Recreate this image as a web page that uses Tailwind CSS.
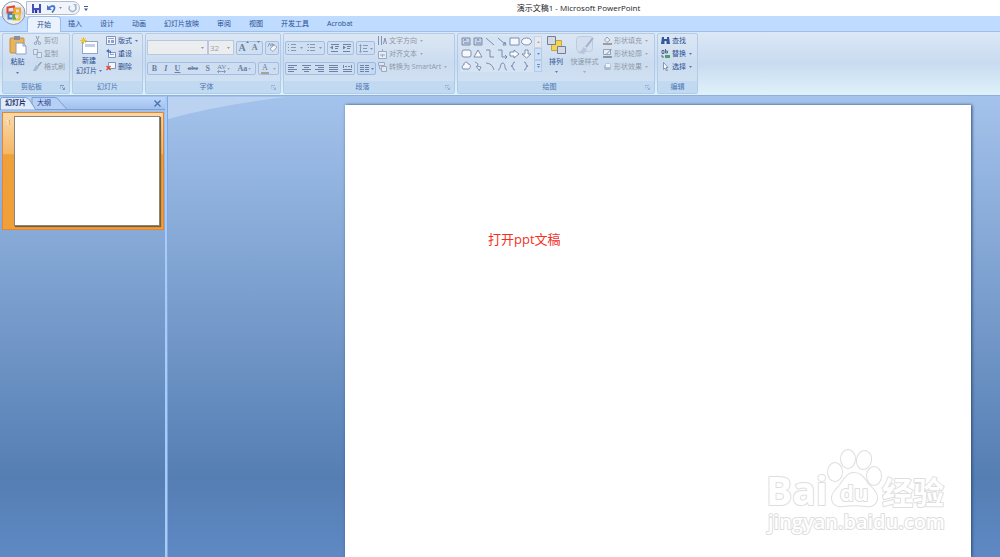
<!DOCTYPE html>
<html lang="zh-CN">
<head>
    <meta charset="utf-8"/>
    <meta content="width=device-width, initial-scale=1.0" name="viewport"/>
    <title>演示文稿1 - Microsoft PowerPoint</title>
    <script src="https://cdn.jsdelivr.net/npm/@tailwindcss/browser@4"></script>
</head>
<body class="flex flex-col min-h-screen overflow-hidden bg-white font-['Open_Sans','Noto_Sans_CJK_SC',sans-serif] text-[7px] leading-[13px] text-[#2a4f8f]">
    <!-- Title bar -->
    <header class="relative flex items-center h-4 bg-white">
        <div class="flex items-center gap-[6px] h-[14px] w-[54px] ml-[26px] pl-[5px] rounded-r-full border border-[#b3bccb] bg-[#f1f5fb]">
            <button aria-label="保存">
                <svg width="9" height="9" viewBox="0 0 9 9"><path d="M0 0h9v9H0z" fill="#4350b8"/><path d="M2 0h5v4H2z" fill="#f2f5ff"/><path d="M2 6h5v3H2z" fill="#c5cdf0"/><path d="M3 6h2v3H3z" fill="#2a3590"/></svg>
            </button>
            <button aria-label="撤消" class="flex items-center gap-[3px]">
                <svg width="9" height="9" viewBox="0 0 9 9" fill="none"><path d="M2 3.500q5-3 5.500 0 .3 2-2.500 5" stroke="#4a74c9" stroke-width="1.800"/><path d="M0 1v5h5z" fill="#4a74c9"/></svg>
                <svg width="3" height="2" viewBox="0 0 3 2"><path d="M0 0h3L1.500 2z" fill="#7d92b8"/></svg>
            </button>
            <button aria-label="重复">
                <svg width="9" height="9" viewBox="0 0 9 9" fill="none"><path d="M2 2a3.300 3.300 0 1 0 5 0" stroke="#a9b6cc" stroke-width="1.600"/><path d="M5 0h3.500v3.500z" fill="#a9b6cc"/></svg>
            </button>
        </div>
        <button aria-label="自定义快速访问工具栏" class="ml-1">
            <svg width="4" height="5" viewBox="0 0 4 5" fill="#3d5b94"><path d="M0 0h4v1H0zM0 2.500h4L2 5z"/></svg>
        </button>
        <h1 class="absolute inset-x-0 top-0 text-center text-[8px] leading-4 text-[#222] pl-[157px]">演示文稿1 - Microsoft PowerPoint</h1>
        <button aria-label="Office 按钮" class="absolute left-[1px] top-0 z-10">
            <svg width="26" height="26" viewBox="0 0 26 26">
                <defs>
                    <linearGradient id="orb" x1="0" y1="0" x2="0" y2="1"><stop offset="0" stop-color="#fff"/><stop offset=".5" stop-color="#cfd5e0"/><stop offset="1" stop-color="#f3f6fa"/></linearGradient>
                </defs>
                <circle cx="12.500" cy="13" r="11.500" fill="url(#orb)" stroke="#8796ad"/>
                <g fill="none" stroke-width="2">
                    <path d="M14 12.500H6.500v-5L13 6.500z" stroke="#dd4a2a"/>
                    <path d="M14 8.500h5v5h-5z" stroke="#f0a42c"/>
                    <path d="M7.500 14h4.500v4.500H7.500z" stroke="#3f7fd0"/>
                    <path d="M12.500 13.500h6v6h-6z" stroke="#f2bd2e"/>
                    <path d="M13 14v4.500h2" stroke="#5fae45"/>
                </g>
            </svg>
        </button>
    </header>

    <!-- Ribbon tabs -->
    <nav class="flex h-4 pl-[27px] bg-[#bfdbff] border-b border-[#9dbfec] leading-[15px]">
        <button class="h-4 px-[9px] rounded-t-sm border-x border-t border-[#9dbce6] bg-[#e9f2fd] -mr-[2px]">开始</button>
        <button class="px-[9px]">插入</button>
        <button class="px-[9px]">设计</button>
        <button class="px-[9px]">动画</button>
        <button class="px-[9px]">幻灯片放映</button>
        <button class="px-[9px]">审阅</button>
        <button class="px-[9px]">视图</button>
        <button class="px-[9px]">开发工具</button>
        <button class="px-[9px]">Acrobat</button>
    </nav>

    <!-- Ribbon -->
    <div class="flex gap-[2px] h-16 pl-[2px] pt-px pb-px bg-linear-to-b from-[#dbe8f7] via-[#c9dbf0] to-[#dff2fa] border-b border-[#8fb0dc]">
        <!-- Clipboard -->
        <section class="flex flex-col w-[68px] rounded-xs border border-[#b2cbe8] bg-linear-to-b from-[#dce7f4] via-[#cbdcf0] to-[#d4e4f4]">
            <div class="flex flex-1">
                <button class="flex flex-col items-center w-7 pl-px pt-px">
                    <svg width="18" height="20" viewBox="0 0 18 20"><rect x="1" y="3" width="14" height="15" rx="1" fill="#e9b45c" stroke="#c48d3a"/><path d="M5 1h6v4H5z" fill="#8a8f9c"/><path d="M7 8h7l3 3v8H7z" fill="#fff" stroke="#8ba0c8"/><path d="M14 8v3h3" fill="none" stroke="#8ba0c8"/></svg>
                    <span class="leading-[13px]">粘贴</span>
                    <svg class="mt-1" width="3" height="2" viewBox="0 0 3 2" fill="#5679b5"><path d="M0 0h3L1.500 2z"/></svg>
                </button>
                <div class="flex flex-col items-start pl-[2px] text-[#8f99a6]">
                    <button class="flex items-center gap-[2px]"><svg width="9" height="9" viewBox="0 0 9 9" fill="none" stroke="#8f9db5"><path d="M3 0l2.500 6M6 0L3.500 6"/><circle cx="2.500" cy="7.300" r="1.200"/><circle cx="6.500" cy="7.300" r="1.200"/></svg>剪切</button>
                    <button class="flex items-center gap-[2px]"><svg width="9" height="9" viewBox="0 0 9 9" fill="#dfe7f2" stroke="#a2b0c7"><path d="M.5.500h4v5h-4zM4 3.500h4.500v5H4z"/></svg>复制</button>
                    <button class="flex items-center gap-[2px]"><svg width="9" height="9" viewBox="0 0 9 9"><path d="M8.500 0 5 4" stroke="#8e9ebb" stroke-width="1.500"/><path d="M3 3l3 2-3 4H0z" fill="#a9b7cc"/></svg>格式刷</button>
                </div>
            </div>
            <div class="flex items-center h-3 bg-[#c1d9f1] text-[#4d74ae] leading-3"><h2 class="flex-1 text-center">剪贴板</h2><button aria-label="剪贴板选项" class="mr-1"><svg width="5" height="5" viewBox="0 0 5 5" fill="none" stroke="#7897c3"><path d="M0 4V.500h4M2 2l2.500 2.500M4.500 2.500v2h-2"/></svg></button></div>
        </section>

        <!-- Slides -->
        <section class="flex flex-col w-[71px] rounded-xs border border-[#b2cbe8] bg-linear-to-b from-[#dce7f4] via-[#cbdcf0] to-[#d4e4f4]">
            <div class="flex flex-1">
                <button class="flex flex-col items-center w-[31px] pl-px pt-[2px]">
                    <svg width="20" height="19" viewBox="0 0 20 19"><rect x="3.500" y="5.500" width="15" height="12" fill="#fff" stroke="#8fa5cc"/><path d="M6 8h10v3H6z" fill="#c2cfe6"/><path d="M4.500 1v7M1 4.500h7M2 2l5 5M7 2L2 7" stroke="#f0c22d"/></svg>
                    <span class="leading-[11px]">新建</span>
                    <span class="flex items-center gap-[2px] leading-[10px] whitespace-nowrap">幻灯片<svg width="3" height="2" viewBox="0 0 3 2" fill="#5679b5"><path d="M0 0h3L1.500 2z"/></svg></span>
                </button>
                <div class="flex flex-col items-start pl-[2px]">
                    <button class="flex items-center gap-[2px]"><svg width="10" height="9" viewBox="0 0 10 9"><path d="M.5.500h9v8h-9z" fill="#f3f7fd" stroke="#7d95bf"/><path d="M2 2h6v1H2zM2 4h2v3H2zM5 4h3v3H5z" fill="#8da3c9"/></svg>版式<svg class="ml-px" width="3" height="2" viewBox="0 0 3 2" fill="#5679b5"><path d="M0 0h3L1.500 2z"/></svg></button>
                    <button class="flex items-center gap-[2px]"><svg width="10" height="9" viewBox="0 0 10 9"><path d="M2.500 3.500h7v5h-7z" fill="#f3f7fd" stroke="#7d95bf"/><path d="M4 5h4v1H4z" fill="#8da3c9"/><path d="M2 2h2.500v2.500" fill="none" stroke="#3e6cc4"/><path d="M0 2 3 0v4z" fill="#3e6cc4"/></svg>重设</button>
                    <button class="flex items-center gap-[2px]"><svg width="10" height="9" viewBox="0 0 10 9"><path d="M2.500.500h7v6h-7z" fill="#f3f7fd" stroke="#7d95bf"/><path d="M.5 4 4.500 8M4.500 4 .5 8" stroke="#e0452b" stroke-width="1.400"/></svg>删除</button>
                </div>
            </div>
            <h2 class="h-3 bg-[#c1d9f1] text-[#4d74ae] text-center leading-3">幻灯片</h2>
        </section>

        <!-- Font -->
        <section class="flex flex-col w-[136px] rounded-xs border border-[#b2cbe8] bg-linear-to-b from-[#dce7f4] via-[#cbdcf0] to-[#d4e4f4]">
            <div class="flex flex-col flex-1 gap-[7px] pl-px pt-[6px]">
                <div class="flex items-center gap-[2px]">
                    <div class="flex h-[15px]">
                        <div class="relative">
                            <select aria-label="字体" class="w-[61px] h-[15px] appearance-none border border-[#b7c9e0] bg-[#ecedee]"><option></option></select>
                            <svg class="absolute right-1 top-[7px]" width="3" height="2" viewBox="0 0 3 2" fill="#9a9a9a"><path d="M0 0h3L1.500 2z"/></svg>
                        </div>
                        <div class="relative">
                            <select aria-label="字号" class="w-[26px] h-[15px] pl-px appearance-none border border-[#b7c9e0] text-[8px] leading-3 text-[#a0a0a0] bg-[#ecedee]"><option>32</option></select>
                            <svg class="absolute right-1 top-[7px]" width="3" height="2" viewBox="0 0 3 2" fill="#9a9a9a"><path d="M0 0h3L1.500 2z"/></svg>
                        </div>
                    </div>
                    <div class="flex items-center justify-around w-[27px] h-[14px] rounded-xs border border-[#a3bee2] bg-[#cfdff2] font-['Liberation_Serif',serif] font-bold text-[#6c7f9f]">
                        <button aria-label="增大字号" class="flex text-[10px]">A<svg width="3" height="3" viewBox="0 0 3 3" fill="#6c7f9f"><path d="M0 2h3L1.500 0z"/></svg></button>
                        <button aria-label="减小字号" class="flex text-[8px]">A<svg width="3" height="3" viewBox="0 0 3 3" fill="#6c7f9f"><path d="M0 0h3L1.500 2z"/></svg></button>
                    </div>
                    <button aria-label="清除格式" class="flex items-center justify-center w-[14px] h-[14px] rounded-xs border border-[#a3bee2] bg-[#cfdff2]"><svg width="10" height="9" viewBox="0 0 10 9"><path d="M1 3.500 2.500 0 4 3.500M5 0v3h2V1.500H5" fill="none" stroke="#8d9cb5"/><path d="M3 6l4-4 3 2-4 4.500z" fill="#f3f5f9" stroke="#9aa9c0"/></svg></button>
                </div>
                <div class="flex items-center gap-[2px] h-[13px]">
                    <div class="flex items-center justify-around w-[109px] h-[13px] rounded-xs border border-[#a3bee2] bg-[#cddef2] font-['Liberation_Serif',serif] font-bold text-[8px] leading-[11px] text-[#6c7f9f]">
                        <button aria-label="加粗">B</button>
                        <button aria-label="倾斜" class="italic">I</button>
                        <button aria-label="下划线" class="underline">U</button>
                        <button aria-label="删除线" class="line-through text-[7px]">abc</button>
                        <button aria-label="阴影">S</button>
                        <button aria-label="字符间距" class="flex items-center gap-px text-[7px] leading-[6px] font-normal"><span class="flex flex-col">AV<svg width="9" height="3" viewBox="0 0 9 3"><path d="M1 1.500h7M2 0 .5 1.500 2 3M7 0l1.500 1.500L7 3" fill="none" stroke="#6c7f9f" stroke-width=".7"/></svg></span><svg width="3" height="2" viewBox="0 0 3 2" fill="#a9a9a9"><path d="M0 0h3L1.500 2z"/></svg></button>
                        <button aria-label="更改大小写" class="flex items-center gap-px">Aa<svg width="3" height="2" viewBox="0 0 3 2" fill="#a9a9a9"><path d="M0 0h3L1.500 2z"/></svg></button>
                    </div>
                    <button aria-label="字体颜色" class="flex items-center justify-center gap-1 w-[21px] h-[13px] rounded-xs border border-[#a3bee2] bg-[#cddef2] font-['Liberation_Serif',serif] text-[8px] leading-[8px] text-[#6c7f9f]"><span class="px-px border-b-2 border-[#a79f98]">A</span><svg width="3" height="2" viewBox="0 0 3 2" fill="#a9a9a9"><path d="M0 0h3L1.500 2z"/></svg></button>
                </div>
            </div>
            <div class="flex items-center h-3 bg-[#c1d9f1] text-[#4d74ae] leading-3"><h2 class="flex-1 text-center pr-1">字体</h2><button aria-label="字体选项" class="mr-1"><svg width="5" height="5" viewBox="0 0 5 5" fill="none" stroke="#9db3d2"><path d="M0 4V.500h4M2 2l2.500 2.500M4.500 2.500v2h-2"/></svg></button></div>
        </section>

        <!-- Paragraph -->
        <section class="flex flex-col w-[172px] rounded-xs border border-[#b2cbe8] bg-linear-to-b from-[#dce7f4] via-[#cbdcf0] to-[#d4e4f4]">
            <div class="flex flex-1 gap-[2px] pl-px">
                <div class="flex flex-col gap-[7px] pt-[7px]">
                    <div class="flex gap-[2px]">
                        <div class="flex items-center justify-around w-10 h-[14px] rounded-xs border border-[#a3bee2] bg-[#cfdff2]">
                            <button aria-label="项目符号"><svg width="15" height="8" viewBox="0 0 15 8" fill="#8798b6"><path d="M0 0h1v1H0zM0 3h1v1H0zM0 6h1v1H0zM3 0h5v1H3zM3 3h5v1H3zM3 6h5v1H3zM12 3h3l-1.500 2z"/></svg></button>
                            <button aria-label="编号"><svg width="15" height="8" viewBox="0 0 15 8" fill="#8798b6"><path d="M0 0h2v1H0zM1 3h1v1H1zM0 6h2v1H0zM3 0h5v1H3zM3 3h5v1H3zM3 6h5v1H3zM12 3h3l-1.500 2z"/></svg></button>
                        </div>
                        <div class="flex items-center justify-around w-[27px] h-[14px] rounded-xs border border-[#a3bee2] bg-[#cfdff2]">
                            <button aria-label="减少缩进"><svg width="9" height="8" viewBox="0 0 9 8" fill="#7082a3"><path d="M1 0h8v1H1zM5 2h4v1H5zM5 4h3v1H5zM1 7h7v1H1zM0 3.500 3 1.500v4z"/></svg></button>
                            <button aria-label="增加缩进"><svg width="9" height="8" viewBox="0 0 9 8" fill="#7082a3"><path d="M1 0h8v1H1zM5 2h4v1H5zM5 4h3v1H5zM1 7h7v1H1zM4 3.500 1 1.500v4z"/></svg></button>
                        </div>
                        <button aria-label="行距" class="flex items-center justify-center w-[19px] h-[14px] rounded-xs border border-[#a3bee2] bg-[#cfdff2]"><svg width="14" height="9" viewBox="0 0 14 9" fill="#8798b6"><path d="M1 2h1v5H1zM0 2h3L1.500 0zM0 7h3L1.500 9zM4 1h5v1H4zM4 4h4v1H4zM4 7h5v1H4zM11 4h3l-1.500 2z"/></svg></button>
                    </div>
                    <div class="flex gap-[2px]">
                        <div class="flex items-center justify-around w-[70px] h-[13px] rounded-xs border border-[#a3bee2] bg-[#cddef2]">
                            <button aria-label="文本左对齐"><svg width="9" height="8" viewBox="0 0 9 8" fill="#7082a3"><path d="M0 0h9v1H0zM0 2h6v1H0zM0 4h9v1H0zM0 6h6v1H0z"/></svg></button>
                            <button aria-label="居中"><svg width="9" height="8" viewBox="0 0 9 8" fill="#7082a3"><path d="M0 0h9v1H0zM2 2h5v1H2zM0 4h9v1H0zM2 6h5v1H2z"/></svg></button>
                            <button aria-label="文本右对齐"><svg width="9" height="8" viewBox="0 0 9 8" fill="#7082a3"><path d="M0 0h9v1H0zM3 2h6v1H3zM0 4h9v1H0zM3 6h6v1H3z"/></svg></button>
                            <button aria-label="两端对齐"><svg width="9" height="8" viewBox="0 0 9 8" fill="#7082a3"><path d="M0 0h9v1H0zM0 2h9v1H0zM0 4h9v1H0zM0 6h9v1H0z"/></svg></button>
                            <button aria-label="分散对齐"><svg width="9" height="8" viewBox="0 0 9 8" fill="#7082a3"><path d="M0 0h1v3H0zM8 0h1v3H8zM2 1h2v1H2zM5 1h2v1H5zM0 4h9v1H0zM0 6h9v1H0z"/></svg></button>
                        </div>
                        <button aria-label="分栏" class="flex items-center justify-center w-[19px] h-[13px] rounded-xs border border-[#9ab8e0] bg-[#c5d9f2]"><svg width="14" height="8" viewBox="0 0 14 8" fill="#7082a3"><path d="M0 0h4v1H0zM0 2h4v1H0zM0 4h4v1H0zM0 6h4v1H0zM5 0h4v1H5zM5 2h4v1H5zM5 4h4v1H5zM5 6h4v1H5zM11 3h3l-1.500 2z"/></svg></button>
                    </div>
                </div>
                <div class="flex flex-col items-start text-[#8f99a6] whitespace-nowrap">
                    <button class="flex items-center gap-[2px]"><svg width="9" height="10" viewBox="0 0 9 10" fill="none" stroke="#7f92b2"><path d="M.5 0v9M3.500 0v9M5.500 8 7 2l1.500 6"/></svg>文字方向<svg class="ml-px" width="3" height="2" viewBox="0 0 3 2" fill="#a9a9a9"><path d="M0 0h3L1.500 2z"/></svg></button>
                    <button class="flex items-center gap-[2px]"><svg width="9" height="10" viewBox="0 0 9 10" fill="#e6edf6" stroke="#9aaac4"><path d="M.5 2.500h8v7h-8z"/><path d="M4.500 0v3M2 6h5M4.500 5v3"/></svg>对齐文本<svg class="ml-px" width="3" height="2" viewBox="0 0 3 2" fill="#a9a9a9"><path d="M0 0h3L1.500 2z"/></svg></button>
                    <button class="flex items-center gap-[2px]"><svg width="9" height="10" viewBox="0 0 9 10" fill="#dfe7f2" stroke="#9aaac4"><path d="M.5.500h6v3h-6zM3.500 4.500h5v5h-5zM1.500 4v3h2"/></svg>转换为 SmartArt<svg class="ml-px" width="3" height="2" viewBox="0 0 3 2" fill="#a9a9a9"><path d="M0 0h3L1.500 2z"/></svg></button>
                </div>
            </div>
            <div class="flex items-center h-3 bg-[#c1d9f1] text-[#4d74ae] leading-3"><h2 class="flex-1 text-center pr-1">段落</h2><button aria-label="段落选项" class="mr-1"><svg width="5" height="5" viewBox="0 0 5 5" fill="none" stroke="#9db3d2"><path d="M0 4V.500h4M2 2l2.500 2.500M4.500 2.500v2h-2"/></svg></button></div>
        </section>

        <!-- Drawing -->
        <section class="flex flex-col w-[198px] rounded-xs border border-[#b2cbe8] bg-linear-to-b from-[#dce7f4] via-[#cbdcf0] to-[#d4e4f4]">
            <div class="flex flex-1 pl-[2px]">
                <div class="flex h-9 mt-[2px] bg-[#d5e3f3]">
                    <svg width="74" height="36" viewBox="0 0 74 36" fill="#f5f8fc" stroke="#64799f" stroke-width=".8" role="img" aria-label="形状">
                        <path d="M2 2h8v7H2zM14 2h8v7h-8z" fill="#c9d5e6"/><path d="M4 5l1-2 1 2M17 5l1-2 1 2M4 7h5M16 7h5"/>
                        <path d="M26 2l8 7M38 2l7 6M46 9l-3 0 2-3z"/><path d="M50 2h9v7h-9z"/><ellipse cx="66.500" cy="5.500" rx="5" ry="3.500"/>
                        <rect x="2" y="14" width="9" height="7" rx="2"/><path d="M18 14l4 7h-8z"/>
                        <g fill="none"><path d="M26 14h4v7h4M38 14h4v7h5M45 19l2 2-2 2"/></g>
                        <path d="M50 16h4v-2l5 4-5 4v-2h-4zM65 14h3v4h3l-4.500 4-4.500-4h3z"/>
                        <path d="M3 33c-2-3 0-4 1-4-1-3 4-4 4-1 3 0 3 3 1 5z"/><path d="M15 26l3 2-1 2 4 1-2 4M16 30l3 4"/>
                        <g fill="none"><path d="M26 27q6 0 8 7M38 34c3 0 2-8 5-7s1 7 4 7M55 26q-2 0-2 2t-2 2q2 0 2 2t2 2M64 26q2 0 2 2t2 2q-2 0-2 2t-2 2"/></g>
                    </svg>
                    <div class="flex flex-col w-2 text-[#6b8cc2]">
                        <button aria-label="上一行" class="flex flex-1 items-center justify-center border border-[#c9d5e4] bg-[#e6eaf0]"><svg width="3" height="2" viewBox="0 0 3 2" fill="#a9a9a9"><path d="M0 2h3L1.500 0z"/></svg></button>
                        <button aria-label="下一行" class="flex flex-1 items-center justify-center border border-[#b3cbea] bg-[#cfe0f6]"><svg width="3" height="2" viewBox="0 0 3 2" fill="currentColor"><path d="M0 0h3L1.500 2z"/></svg></button>
                        <button aria-label="其他" class="flex flex-1 items-center justify-center border border-[#b3cbea] bg-[#cfe0f6]"><svg width="3" height="4" viewBox="0 0 3 4" fill="currentColor"><path d="M0 0h3v1H0zM0 2h3L1.500 4z"/></svg></button>
                    </div>
                </div>
                <button class="flex flex-col items-center w-[27px] pl-px pt-px">
                    <svg width="20" height="20" viewBox="0 0 20 20"><path d="M5.500 5.500h10v10h-10z" fill="#f5d254" stroke="#c9a43a"/><path d="M1.500 1.500h8v8h-8zM11.500 11.500h8v7h-8z" fill="#d5dae2" stroke="#70809c"/></svg>
                    <span class="leading-[13px]">排列</span>
                    <svg class="mt-[3px]" width="3" height="2" viewBox="0 0 3 2" fill="#5679b5"><path d="M0 0h3L1.500 2z"/></svg>
                </button>
                <button class="flex flex-col items-center w-[31px] pt-px text-[#8f99a6] whitespace-nowrap">
                    <svg width="20" height="20" viewBox="0 0 20 20"><rect x="1.500" y="1.500" width="16" height="15" rx="3" fill="#d3dfee" stroke="#bccbe0"/><path d="M18 3l-7 9" stroke="#9fb0ca" stroke-width="2"/><path d="M8 12l4 2-3 5-7-1q5-1 6-6z" fill="#b9c6da"/></svg>
                    <span class="leading-[13px]">快速样式</span>
                    <svg class="mt-[3px]" width="3" height="2" viewBox="0 0 3 2" fill="#a9a9a9"><path d="M0 0h3L1.500 2z"/></svg>
                </button>
                <div class="flex flex-col items-start pl-[3px] text-[#8f99a6] whitespace-nowrap">
                    <button class="flex items-center gap-[2px]"><svg width="9" height="9" viewBox="0 0 9 9"><path d="M1.500 4 4 1l3 3-3 2.500z" fill="#e8edf4" stroke="#93a3bd"/><path d="M0 7h9v2H0z" fill="#a39c94"/></svg>形状填充<svg class="ml-px" width="3" height="2" viewBox="0 0 3 2" fill="#a9a9a9"><path d="M0 0h3L1.500 2z"/></svg></button>
                    <button class="flex items-center gap-[2px]"><svg width="9" height="9" viewBox="0 0 9 9"><path d="M.5.500h7v5h-7z" fill="#e8edf4" stroke="#93a3bd"/><path d="M8.500 0 3 5.500" stroke="#7c8dab"/><path d="M0 7h9v2H0z" fill="#8c94a3"/></svg>形状轮廓<svg class="ml-px" width="3" height="2" viewBox="0 0 3 2" fill="#a9a9a9"><path d="M0 0h3L1.500 2z"/></svg></button>
                    <button class="flex items-center gap-[2px]"><svg width="9" height="9" viewBox="0 0 9 9"><rect x="1" y="3" width="7" height="5" rx="2" fill="#a9b8cf"/><rect x="2.500" y="1.500" width="5" height="4" rx="1" fill="#f1f4f9" stroke="#b4c1d6"/></svg>形状效果<svg class="ml-px" width="3" height="2" viewBox="0 0 3 2" fill="#a9a9a9"><path d="M0 0h3L1.500 2z"/></svg></button>
                </div>
            </div>
            <div class="flex items-center h-3 bg-[#c1d9f1] text-[#4d74ae] leading-3"><h2 class="flex-1 text-center pr-1">绘图</h2><button aria-label="绘图选项" class="mr-1"><svg width="5" height="5" viewBox="0 0 5 5" fill="none" stroke="#9db3d2"><path d="M0 4V.500h4M2 2l2.500 2.500M4.500 2.500v2h-2"/></svg></button></div>
        </section>

        <!-- Editing -->
        <section class="flex flex-col w-[41px] rounded-xs border border-[#b2cbe8] bg-linear-to-b from-[#dce7f4] via-[#cbdcf0] to-[#d4e4f4]">
            <div class="flex flex-col items-start flex-1 pl-[3px]">
                <button class="flex items-center gap-[2px]"><svg width="9" height="9" viewBox="0 0 9 9" fill="#34579c"><path d="M1 1h2v2h3V1h2l1 7H5.500V5h-2v3H0z"/></svg>查找</button>
                <button class="flex items-center gap-[2px]"><svg width="9" height="9" viewBox="0 0 9 9" fill="none"><path d="M1 1.500h2v3H1zM4.500 0v4h2V2h-2" stroke="#54678d"/><path d="M1 6v2h2" stroke="#54678d"/><path d="M4 6h5v3H4z" fill="#49a060"/></svg>替换<svg class="ml-px" width="3" height="2" viewBox="0 0 3 2" fill="#5679b5"><path d="M0 0h3L1.500 2z"/></svg></button>
                <button class="flex items-center gap-[2px]"><svg width="9" height="9" viewBox="0 0 9 9"><path d="M2.500.500v7l1.500-1.500 1.500 3 1-.5-1.500-3h2z" fill="#fff" stroke="#6e82a8" stroke-width=".8"/></svg>选择<svg class="ml-px" width="3" height="2" viewBox="0 0 3 2" fill="#5679b5"><path d="M0 0h3L1.500 2z"/></svg></button>
            </div>
            <h2 class="h-3 bg-[#c1d9f1] text-[#4d74ae] text-center leading-3">编辑</h2>
        </section>
    </div>

    <!-- Workspace -->
    <div class="flex flex-1 bg-linear-to-b from-[#a4c3ec] from-0% via-[#557eb3] via-83% to-[#5f89c4] to-100%">
        <!-- Slide list -->
        <aside class="w-[165px] pt-px">
            <div class="relative flex items-center h-[13px] bg-linear-to-b from-[#bdd7fb] to-[#a0c0ee] border-b border-[#7ba0d4] leading-3">
                <svg class="absolute left-0 top-0" width="70" height="13" viewBox="0 0 70 13"><path d="M32 .500h23q3 0 5 4l7 8H32z" fill="#b5cff5" stroke="#7c9fd2"/><path d="M.5 13V2q0-1.500 2-1.500h23q3 0 5 4L36 13z" fill="#dfeafa" stroke="#7c9fd2"/></svg>
                <button class="relative pl-[5px] font-bold text-[#25346f]">幻灯片</button>
                <button class="relative pl-[11px] text-[#2b3c86]">大纲</button>
                <button aria-label="关闭" class="relative ml-auto mr-1"><svg width="7" height="7" viewBox="0 0 7 7"><path d="M.5.500l6 6M6.500.500l-6 6" stroke="#4a6fae" stroke-width="1.300"/></svg></button>
            </div>
            <div class="flex mt-[2px] ml-[2px] mr-px p-[3px] border border-[#e58433] bg-linear-to-b from-[#fbd9a8] from-0% via-[#f3b766] via-35% to-[#f0a039] to-36%">
                <span class="w-2 text-white [text-shadow:1px_0_0_#b58a50]">1</span>
                <div class="flex-1 aspect-4/3 bg-white border border-[#8a8478] shadow-[1px_1px_1px_#7a6038]"></div>
            </div>
        </aside>
        <div class="w-[3px] bg-[#a9cbf8] border-r border-[#7fa8e0]"></div>

        <!-- Slide -->
        <main class="relative flex flex-1 pl-[177px] pr-[29px] pt-[9px]">
            <svg class="absolute left-0 top-px" width="118" height="22" viewBox="0 0 118 22"><path d="M0 0h118Q50 8 0 22z" fill="#bcd2f1"/></svg>
            <div class="relative flex-1 pl-[143px] pt-[126px] bg-white shadow-[1px_0_3px_#2c4a78]">
                <p class="text-[13px] leading-4 text-[#f5301f]">打开ppt文稿</p>
                <svg class="absolute right-[21px] bottom-5" width="190" height="92" viewBox="0 0 190 92" fill="#fff" stroke="#dedede" stroke-width="2" paint-order="stroke" stroke-linejoin="round" role="img" aria-label="Baidu 经验">
                    <ellipse cx="75" cy="27" rx="7" ry="9"/>
                    <ellipse cx="88" cy="14" rx="7" ry="9"/>
                    <ellipse cx="104" cy="15" rx="7" ry="9" transform="rotate(12 104 15)"/>
                    <ellipse cx="114" cy="31" rx="7" ry="9"/>
                    <path d="M94 28c8 0 10 6 15 12 5 5 9 9 8 14-1 6-6 8-11 7-8-1-16-1-23 0-6 1-11-2-11-8 0-5 4-8 8-13 5-6 7-12 14-12z"/>
                    <text x="6" y="60" font-family="'Open Sans',sans-serif" font-size="39" font-weight="700">Bai</text>
                    <text x="80" y="56" font-family="'Open Sans',sans-serif" font-size="22" font-weight="700">du</text>
                    <text x="122" y="59" font-family="'Noto Sans CJK SC',sans-serif" font-size="31" font-weight="700">经验</text>
                    <text x="8" y="84" font-family="'Open Sans',sans-serif" font-size="20" font-weight="600">jingyan.baidu.com</text>
                </svg>
            </div>
        </main>
    </div>
</body>
</html>
